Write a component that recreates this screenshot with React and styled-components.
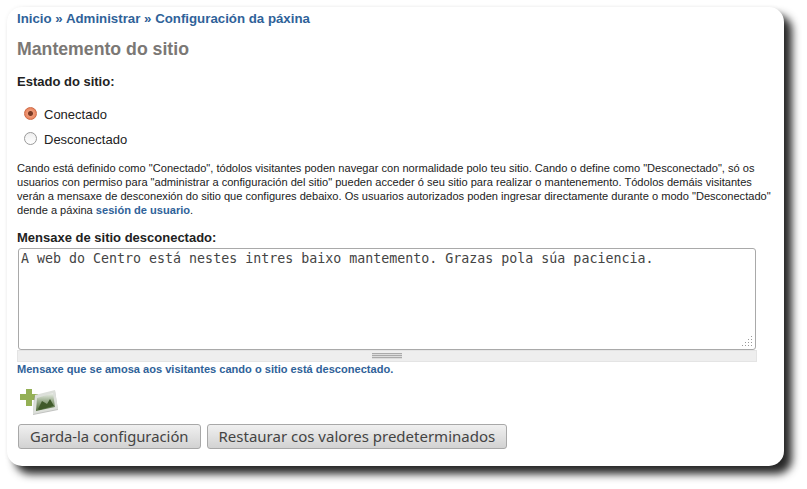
import React from "react";
import styled, { createGlobalStyle } from "styled-components";

const Global = createGlobalStyle`
  html, body { margin: 0; padding: 0; background: #fff; }
  body { font-family: "Liberation Sans", Arial, sans-serif; color: #222; }
`;

const Page = styled.div`
  width: 807px;
  height: 489px;
  padding: 7px 0 0 7px;
  box-sizing: border-box;
  overflow: hidden;
`;

const Card = styled.main`
  width: 777px;
  height: 459px;
  box-sizing: border-box;
  padding: 4px 10px 0 10px;
  background: #fff;
  border-radius: 15px;
  box-shadow: 8px 8px 9px rgba(0, 0, 0, 0.85), 0 0 4px rgba(0, 0, 0, 0.06);
`;

const Crumbs = styled.nav`
  font-size: 13.27px;
  font-weight: bold;
  line-height: 15px;
  color: #2f5f96;
`;

const CrumbLink = styled.a`
  color: #2f6299;
  text-decoration: none;
`;

const Title = styled.h2`
  margin: 13px 0 0;
  font-size: 17.7px;
  line-height: 20px;
  font-weight: bold;
  color: #7b7875;
`;

const Label = styled.label`
  display: block;
  font-size: 13px;
  font-weight: bold;
  line-height: 15px;
  color: #222;
  margin-top: ${(p) => p.$top}px;
`;

const Radios = styled.div`
  margin-top: 18px;
  display: flex;
  flex-direction: column;
  gap: 10px;
  padding-left: 7px;
`;

const RadioRow = styled.div`
  display: flex;
  align-items: center;
  height: 15px;
  gap: 7px;
  font-size: 13px;
  color: #222;
`;

const RadioOn = styled.span`
  width: 13px;
  height: 13px;
  box-sizing: border-box;
  margin-top: -3px;
  border-radius: 50%;
  border: 1px solid #cf6a45;
  background: radial-gradient(circle, #7a3a24 0 2px, #ee9a78 3px, #e4724a 100%);
`;

const RadioOff = styled.span`
  width: 13px;
  height: 13px;
  box-sizing: border-box;
  margin-top: -3px;
  border-radius: 50%;
  border: 1px solid #9a9a9a;
  background: linear-gradient(#eee, #fff);
`;

const Description = styled.p`
  margin: 14px 0 0;
  font-size: 11.09px;
  line-height: 14px;
  color: #222;
  width: 760px;
`;

const InlineLink = styled.a`
  color: #2f6299;
  font-weight: bold;
  text-decoration: none;
`;

const TextBox = styled.div`
  position: relative;
  margin: 3px 0 0 1px;
  width: 738px;
  height: 102px;
  box-sizing: border-box;
  padding: 2px 2px;
  border: 1px solid #a9a9a9;
  border-radius: 3px;
  font-family: "DejaVu Sans Mono", monospace;
  font-size: 13.3px;
  line-height: 16px;
  color: #444;
  white-space: pre;
`;

const Grip = styled.svg`
  position: absolute;
  right: 1px;
  bottom: 1px;
`;

const Splitter = styled.div`
  width: 740px;
  height: 12px;
  box-sizing: border-box;
  background: #eee;
  border: 1px solid #e4e4e4;
  display: flex;
  align-items: center;
  justify-content: center;
`;

const SplitHandle = styled.span`
  width: 30px;
  height: 6px;
  background: repeating-linear-gradient(#aaa 0 1px, #ddd 1px 2px);
`;

const Hint = styled.div`
  margin-top: 1px;
  font-size: 11.07px;
  line-height: 13px;
  font-weight: bold;
  color: #2f6299;
`;

const Addon = styled.svg`
  display: block;
  margin: 12px 0 0 2px;
`;

const Buttons = styled.div`
  display: flex;
  gap: 6px;
  margin: 8px 0 0 1px;
`;

const Button = styled.button`
  height: 25px;
  padding: 0 11px;
  box-sizing: border-box;
  border: 1px solid #a8a8a8;
  border-radius: 3px;
  background: linear-gradient(#f0f0f0, #d2d2d2);
  font-family: "Noto Sans", sans-serif;
  font-size: ${(p) => p.$size}px;
  line-height: 21px;
  color: #444;
`;

export default function App() {
  return (
    <Page>
      <Global />
      <Card>
        <Crumbs>
          <CrumbLink href="#">Inicio</CrumbLink> » <CrumbLink href="#">Administrar</CrumbLink> » <CrumbLink href="#">Configuración da páxina</CrumbLink>
        </Crumbs>
        <Title>Mantemento do sitio</Title>
        <Label $top={15}>Estado do sitio:</Label>
        <Radios>
          <RadioRow><RadioOn />Conectado</RadioRow>
          <RadioRow><RadioOff />Desconectado</RadioRow>
        </Radios>
        <Description>
          Cando está definido como "Conectado", tódolos visitantes poden navegar con normalidade polo teu sitio. Cando o define como "Desconectado", só os usuarios con permiso para "administrar a configuración del sitio" pueden acceder ó seu sitio para realizar o mantenemento. Tódolos demáis visitantes verán a mensaxe de desconexión do sitio que configures debaixo. Os usuarios autorizados poden ingresar directamente durante o modo "Desconectado" dende a páxina <InlineLink href="#">sesión de usuario</InlineLink>.
        </Description>
        <Label $top={13}>Mensaxe de sitio desconectado:</Label>
        <TextBox>
          A web do Centro está nestes intres baixo mantemento. Grazas pola súa paciencia.
          <Grip width="13" height="13" viewBox="0 0 13 13" fill="#999">
            <rect x="10" y="1" width="1" height="1" /><rect x="10" y="4" width="1" height="1" /><rect x="7" y="4" width="1" height="1" /><rect x="10" y="7" width="1" height="1" /><rect x="7" y="7" width="1" height="1" /><rect x="4" y="7" width="1" height="1" /><rect x="10" y="10" width="1" height="1" /><rect x="7" y="10" width="1" height="1" /><rect x="4" y="10" width="1" height="1" /><rect x="1" y="10" width="1" height="1" />
          </Grip>
        </TextBox>
        <Splitter><SplitHandle /></Splitter>
        <Hint>Mensaxe que se amosa aos visitantes cando o sitio está desconectado.</Hint>
        <Addon width="40" height="28" viewBox="0 0 40 28">
          <defs>
            <filter id="soft" x="-10%" y="-10%" width="120%" height="120%"><feGaussianBlur stdDeviation="0.5" /></filter>
            <linearGradient id="sky" x1="0" y1="0" x2="0" y2="1">
              <stop offset="0" stopColor="#eef1ec" />
              <stop offset="0.4" stopColor="#a3b496" />
              <stop offset="1" stopColor="#4f6a38" />
            </linearGradient>
          </defs>
          <g filter="url(#soft)">
            <path d="M7 1h6v5h6v6h-6v6H7v-6H1V6h6z" fill="#94b055" />
            <path d="M15 7L36 2l3 19-25 5z" fill="#777a75" opacity="0.45" transform="translate(0 1)" />
            <path d="M16 7L36 2l3 19-25 5z" fill="#dcdfda" />
            <path d="M18 10l16-5 2 14-19 4z" fill="url(#sky)" />
            <path d="M19 21l4-8 5 3 3-5 4 7-15 4z" fill="#3f5a2c" />
          </g>
        </Addon>
        <Buttons>
          <Button $size={14.8}>Garda-la configuración</Button>
          <Button $size={15}>Restaurar cos valores predeterminados</Button>
        </Buttons>
      </Card>
    </Page>
  );
}
